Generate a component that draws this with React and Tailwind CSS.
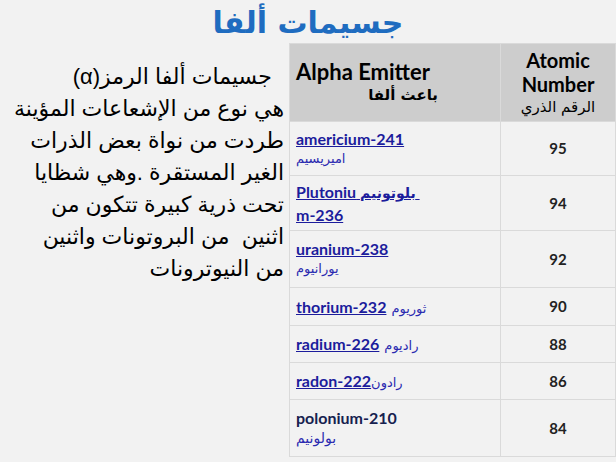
import React from "react";

const ar = { fontFamily: '"DejaVu Sans", "Liberation Sans", sans-serif' };
const lat = { fontFamily: 'Lato, "Liberation Sans", "DejaVu Sans", sans-serif' };

function Link({ children }) {
  return <span className="font-bold underline text-[#1c1c9c]">{children}</span>;
}

function ArSmall({ children, className = "" }) {
  return (
    <span dir="rtl" className={"text-[13px] text-[#2a2ab0] " + className} style={ar}>
      {children}
    </span>
  );
}

const rows = [
  {
    h: "h-[54px]",
    n: "95",
    c: (
      <div className="flex flex-col items-start leading-[20px]">
        <Link>americium-241</Link>
        <ArSmall>اميريسيم</ArSmall>
      </div>
    ),
  },
  {
    h: "h-[55px]",
    n: "94",
    c: (
      <div className="flex flex-col items-start leading-[21px]">
        <span className="font-bold underline text-[#1c1c9c]">
          Plutoniu{" "}
          <span dir="rtl" className="text-[14px]" style={ar}>بلوتونيم</span>
          {"\u00a0"}
        </span>
        <Link>m-236</Link>
      </div>
    ),
  },
  {
    h: "h-[57px]",
    n: "92",
    c: (
      <div className="flex flex-col items-start leading-[20px]">
        <Link>uranium-238</Link>
        <ArSmall>يورانيوم</ArSmall>
      </div>
    ),
  },
  {
    h: "h-[38px]",
    n: "90",
    c: (
      <div className="flex items-baseline gap-[5px]">
        <Link>thorium-232</Link>
        <ArSmall>ثوريوم</ArSmall>
      </div>
    ),
  },
  {
    h: "h-[37px]",
    n: "88",
    c: (
      <div className="flex items-baseline gap-[5px]">
        <Link>radium-226</Link>
        <ArSmall>راديوم</ArSmall>
      </div>
    ),
  },
  {
    h: "h-[37px]",
    n: "86",
    c: (
      <div className="flex items-baseline">
        <Link>radon-222</Link>
        <ArSmall>رادون</ArSmall>
      </div>
    ),
  },
  {
    h: "h-[57px]",
    n: "84",
    c: (
      <div className="flex flex-col items-start leading-[20px]">
        <span className="font-bold text-[#16214f]">polonium-210</span>
        <ArSmall className="text-[14px]">بولونيم</ArSmall>
      </div>
    ),
  },
];

export default function App() {
  return (
    <div className="w-[616px] h-[462px] overflow-hidden bg-[#f2f2f2] flex flex-col">
      <div className="h-[43px] flex items-center justify-center">
        <h1
          dir="rtl"
          className="text-[30px] font-bold text-[#1f6cc0] leading-none mt-[2px]"
          style={ar}
        >
          جسيمات ألفا
        </h1>
      </div>
      <div className="flex flex-1">
        <div className="w-[290px] pr-[5px] pt-[18px]">
          <p
            dir="rtl"
            className="text-[22px] leading-[32px] text-black whitespace-pre"
            style={{ fontFamily: '"Liberation Sans", "DejaVu Sans", sans-serif' }}
          >
            {"  جسيمات ألفا الرمز(α)\n"}
            {"هي نوع من الإشعاعات المؤينة\n"}
            {"طردت من نواة بعض الذرات\n"}
            {"الغير المستقرة .وهي شظايا\n"}
            {"تحت ذرية كبيرة تتكون من\n"}
            {"اثنين  من البروتونات واثنين\n"}
            {"من النيوترونات"}
          </p>
        </div>
        <div className="w-[327px] shrink-0">
          <table className="border-collapse w-[327px] text-[16px]" style={lat}>
            <thead>
              <tr className="h-[78px] bg-[#cdcdcd]">
                <th className="w-[211px] border border-[#dadada] text-left align-middle pl-[6px] font-normal">
                  <div className="inline-block w-[142px]">
                    <div className="text-[22px] font-bold text-black leading-[24px] whitespace-nowrap">Alpha Emitter</div>
                    <div dir="rtl" className="text-[15px] font-bold text-black leading-[22px] text-right" style={ar}>
                      باعث ألفا
                    </div>
                  </div>
                </th>
                <th className="border border-[#dadada] text-center align-middle font-normal">
                  <div className="text-[20px] font-bold text-black leading-[24px]">Atomic</div>
                  <div className="text-[20px] font-bold text-black leading-[24px]">Number</div>
                  <div dir="rtl" className="text-[15px] text-black leading-[22px]" style={ar}>
                    الرقم الذري
                  </div>
                </th>
              </tr>
            </thead>
            <tbody>
              {rows.map((r, i) => (
                <tr key={i} className={r.h}>
                  <td className="border border-[#dadada] pl-[6px] align-middle">{r.c}</td>
                  <td className="border border-[#dadada] text-center align-middle font-bold text-[15px] text-[#222]">
                    {r.n}
                  </td>
                </tr>
              ))}
            </tbody>
          </table>
        </div>
      </div>
    </div>
  );
}
